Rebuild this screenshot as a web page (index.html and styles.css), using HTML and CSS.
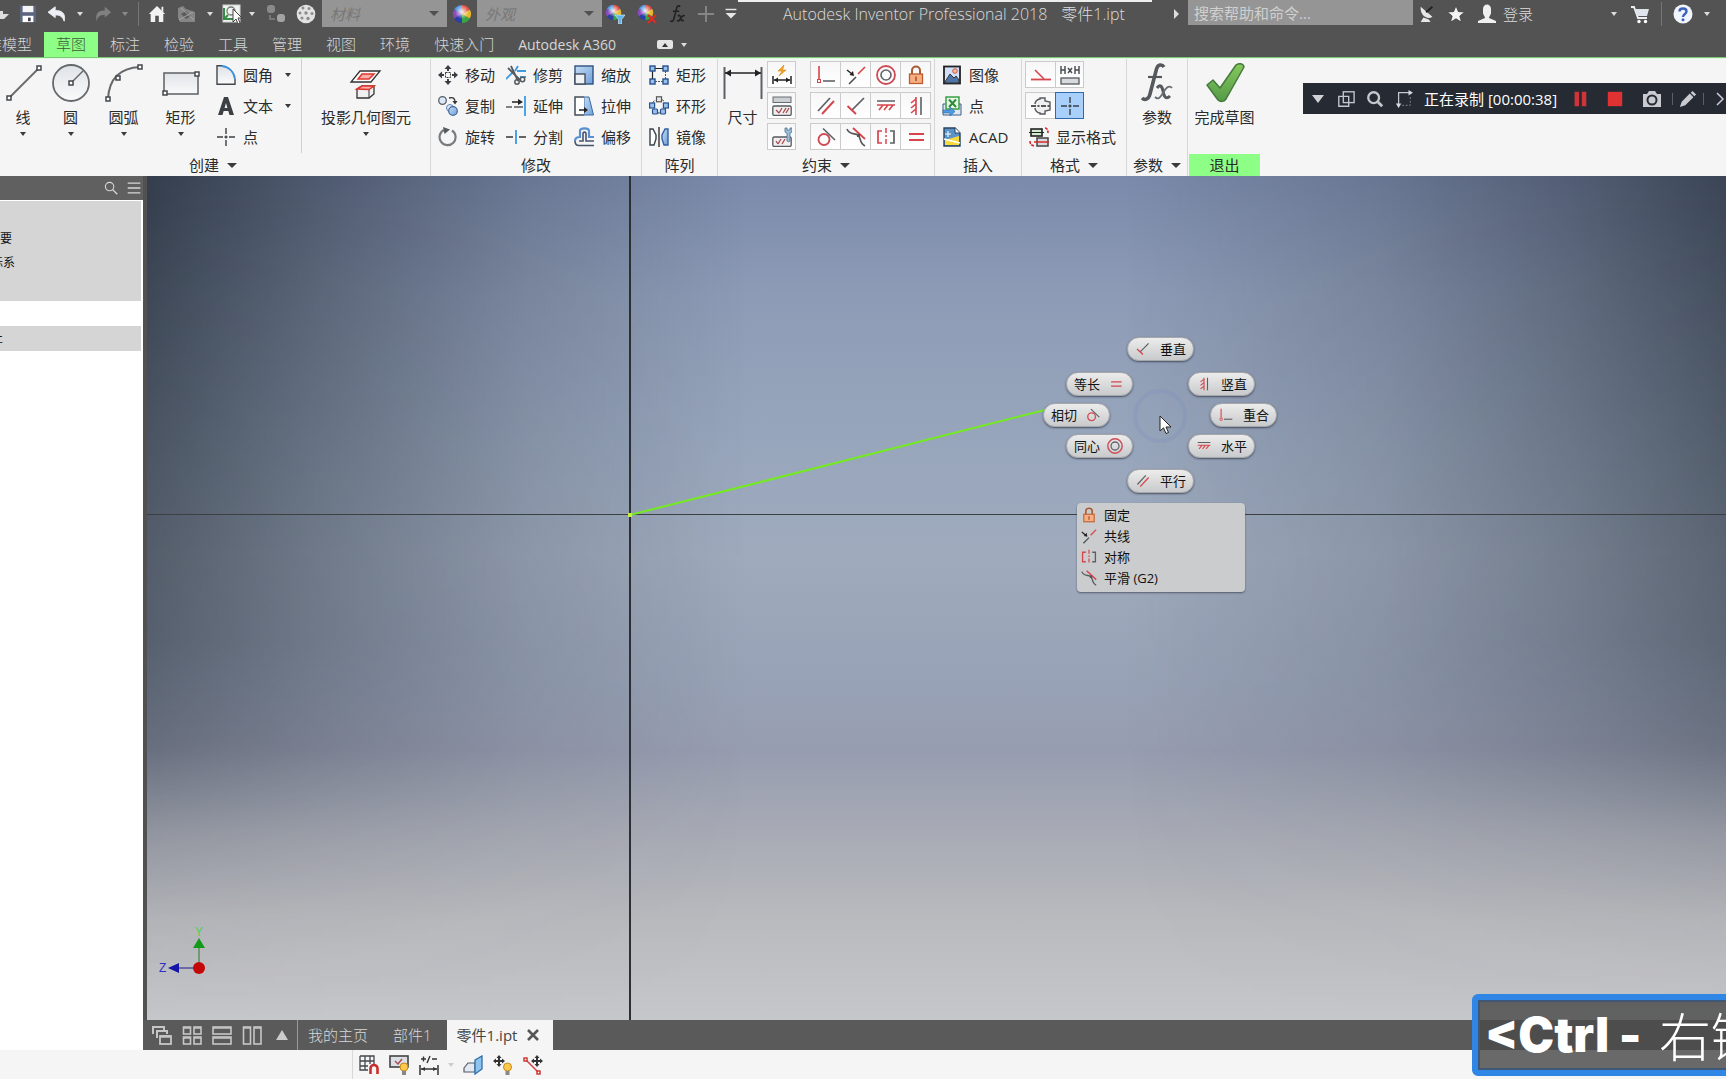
FILE: index.html
```html
<!DOCTYPE html>
<html lang="zh-CN">
<head>
<meta charset="utf-8">
<title>Autodesk Inventor Professional 2018 - 零件1.ipt</title>
<link rel="stylesheet" href="styles.css">
</head>
<body>
<svg class="defs" aria-hidden="true">
  <defs>
    <linearGradient id="steel" x1="0" y1="0" x2="0" y2="1"><stop offset="0" stop-color="#dfe3e8"/><stop offset="1" stop-color="#fafafa"/></linearGradient>
    <linearGradient id="tick" x1="0" y1="0" x2="0" y2="1"><stop offset="0" stop-color="#86c95f"/><stop offset="1" stop-color="#559a48"/></linearGradient>
    <linearGradient id="blue" x1="0" y1="0" x2="1" y2="1"><stop offset="0" stop-color="#c4dcf6"/><stop offset="1" stop-color="#6f9fd8"/></linearGradient>
    <radialGradient id="shine"><stop offset="0" stop-color="#fff" stop-opacity=".9"/><stop offset="1" stop-color="#fff" stop-opacity="0"/></radialGradient>
  </defs>
  <symbol id="i-coincident" viewBox="0 0 20 20"><path d="M3 1V14" stroke="#d6444c" stroke-width="1.6" fill="none"/><rect x="1.500" y="14.500" width="3" height="3" fill="none" stroke="#d6444c"/><path d="M7 16H19" stroke="#55595e" stroke-width="1.500"/></symbol>
  <symbol id="i-collinear" viewBox="0 0 20 20"><path d="M3 19L10 12" stroke="#4b4f54" stroke-width="1.600"/><path d="M12 9L19 2" stroke="#d6444c" stroke-width="1.600"/><path d="M1 5L6 9" stroke="#222" stroke-width="1.400"/><path d="M8 11L3.500 10L7 6Z" fill="#222"/></symbol>
  <symbol id="i-concentric" viewBox="0 0 20 20"><circle cx="10" cy="10" r="9" fill="none" stroke="#cf4b55" stroke-width="1.800"/><circle cx="10" cy="10" r="5" fill="none" stroke="#60646a" stroke-width="1.600"/></symbol>
  <symbol id="i-lock" viewBox="0 0 20 20"><path d="M6 9V5.500a4 4 0 0 1 8 0V9" fill="none" stroke="#a85a36" stroke-width="2"/><rect x="3.500" y="9" width="13" height="9.500" fill="#f7ae80" stroke="#bd5a30" stroke-width="1.300"/><path d="M10 11.500V16" stroke="#a04a2a" stroke-width="1.400"/></symbol>
  <symbol id="i-parallel" viewBox="0 0 20 20"><path d="M2 15L14 2" stroke="#5c6066" stroke-width="1.700"/><path d="M6 18L18 5" stroke="#d6444c" stroke-width="1.900"/></symbol>
  <symbol id="i-perp" viewBox="0 0 20 20"><path d="M6 14L18 2" stroke="#5c6066" stroke-width="1.700"/><path d="M1.500 10L10 18" stroke="#d6444c" stroke-width="1.900"/></symbol>
  <symbol id="i-horizontal" viewBox="0 0 20 20"><path d="M1 5H19" stroke="#5c6066" stroke-width="1.500"/><path d="M1 9H19M7 9L3 14M12 9L8 14M17 9L13 14" stroke="#d6444c" stroke-width="1.600" fill="none"/></symbol>
  <symbol id="i-vertical" viewBox="0 0 20 20"><path d="M15 1V19" stroke="#5c6066" stroke-width="1.600"/><path d="M10 1V19M10 3L5 7M10 8L5 12M10 13L5 17" stroke="#d6444c" stroke-width="1.600" fill="none"/></symbol>
  <symbol id="i-tangent" viewBox="0 0 20 20"><circle cx="8" cy="12.500" r="5.500" fill="none" stroke="#cf4b55" stroke-width="1.900"/><path d="M7 1.500L19 13" stroke="#5c6066" stroke-width="1.600"/></symbol>
  <symbol id="i-smooth" viewBox="0 0 20 20"><path d="M1 2C3 8 9 6 12 8C15 10 13 16 19 19" fill="none" stroke="#55595e" stroke-width="1.600"/><path d="M7 1L19 12" stroke="#d6444c" stroke-width="1.800"/><rect x="11" y="7" width="3" height="3" fill="#555"/></symbol>
  <symbol id="i-symmetric" viewBox="0 0 20 20"><path d="M6 4H2V16H6" fill="none" stroke="#d6444c" stroke-width="1.700"/><path d="M10 1V19" stroke="#d6444c" stroke-width="1.500" stroke-dasharray="5 2 2 2"/><path d="M14 4H18V16H14" fill="none" stroke="#5c6066" stroke-width="1.700"/></symbol>
  <symbol id="i-equal" viewBox="0 0 20 20"><path d="M3 7H18M3 13H18" stroke="#d6444c" stroke-width="1.800"/></symbol>
  <symbol id="i-autodim" viewBox="0 0 20 20"><path d="M12 0L6 6H10L7 11L14 5H10.500Z" fill="#f5a623" stroke="#d58310" stroke-width=".6"/><path d="M1 11V19M19 11V19M2 15H18" stroke="#222" stroke-width="1.500"/><path d="M2 15L6 12.500V17.500ZM18 15L14 12.500V17.500Z" fill="#222"/></symbol>
  <symbol id="i-showcon" viewBox="0 0 20 20"><rect x="1" y="1" width="18" height="5.500" fill="#ccd0d4" stroke="#666b70"/><rect x=".8" y="10" width="18.400" height="9.500" rx="1.500" fill="#f0eeee" stroke="#555a60" stroke-width="1.300"/><path d="M4 14L7 17M10 12L7 17M11 17L14 12M14 17L17 12" stroke="#a84a50" stroke-width="1.300"/></symbol>
  <symbol id="i-setcon" viewBox="0 0 20 20"><rect x=".8" y="10" width="18.400" height="9.500" rx="1.500" fill="#f0eeee" stroke="#555a60" stroke-width="1.300"/><path d="M4 14L6 17M9 12L6 17M10 17L13 12" stroke="#a84a50" stroke-width="1.300"/><path d="M13 1V5L15 6V14a2 2 0 0 0 3 0V6L20 5V1H18V3H15V1Z" fill="#9fc0dc" stroke="#4a6f90" stroke-width=".8"/></symbol>
  <symbol id="i-line" viewBox="0 0 40 40"><path d="M6 35L36 5" stroke="#66696c" stroke-width="1.800"/><g fill="#fff" stroke="#44484c" stroke-width="1.500"><rect x="4" y="33" width="4" height="4"/><rect x="34" y="3" width="4" height="4"/></g></symbol>
  <symbol id="i-circle" viewBox="0 0 40 40"><circle cx="20" cy="20" r="18" fill="url(#steel)" stroke="#66696c" stroke-width="1.800"/><path d="M20 20L32 8" stroke="#66696c" stroke-width="1.500"/><rect x="18" y="18" width="4" height="4" fill="#fff" stroke="#44484c" stroke-width="1.500"/></symbol>
  <symbol id="i-arc" viewBox="0 0 40 40"><path d="M4 36C5 16 16 5 36 4" fill="none" stroke="#66696c" stroke-width="2"/><g fill="#fff" stroke="#44484c" stroke-width="1.500"><rect x="2" y="34" width="4" height="4"/><rect x="12" y="13" width="4" height="4"/><rect x="34" y="2" width="4" height="4"/></g></symbol>
  <symbol id="i-rect" viewBox="0 0 40 40"><rect x="3" y="10" width="34" height="21" fill="url(#steel)" stroke="#66696c" stroke-width="1.600"/><g fill="#fff" stroke="#44484c" stroke-width="1.500"><rect x="2" y="28" width="4" height="4"/><rect x="34" y="9" width="4" height="4"/></g></symbol>
  <symbol id="i-fillet" viewBox="0 0 20 20"><path d="M1 19V1H6C13 2 18 7 19 14V19Z" fill="url(#steel)"/><path d="M6 .8H1V19.200H19V14" fill="none" stroke="#44484c" stroke-width="1.400"/><path d="M6 1C13 2 18 7 19 14" fill="none" stroke="#3b8fdc" stroke-width="1.800"/></symbol>
  <symbol id="i-text" viewBox="0 0 20 20"><path d="M2 19L8 1H12L18 19H13.500L12.300 15H7.700L6.500 19ZM8.600 12H11.400L10 7Z" fill="#3c4044" fill-rule="evenodd"/></symbol>
  <symbol id="i-point" viewBox="0 0 20 20"><path d="M10 1V7M10 13V19M1 10H7M13 10H19M8.500 10H11.500M10 8.500V11.500" stroke="#3c4044" stroke-width="1.400"/></symbol>
  <symbol id="i-project" viewBox="0 0 40 40"><path d="M14 8H34L25 19H5Z" fill="#fff" stroke="#333" stroke-width="1.300"/><path d="M16 11H28L23 16H12Z" fill="#f8b0aa" stroke="#e0362e" stroke-width="1.500"/><path d="M11 26L16 23H28V31L23 35H11Z" fill="#f0f0f0" stroke="#333" stroke-width="1.300"/><path d="M11 26L16 23H28L23 26.500Z" fill="#f8b0aa" stroke="#e0362e" stroke-width="1.500"/><path d="M23 27V35" stroke="#333"/></symbol>
  <symbol id="i-move" viewBox="0 0 20 20"><rect x="7.500" y="7.500" width="5" height="5" fill="none" stroke="#333" stroke-dasharray="2 1"/><g fill="#3a3e44"><path d="M10 0L13.500 4H11V6H9V4H6.500ZM10 20L13.500 16H11V14H9V16H6.500ZM0 10L4 6.500V9H6V11H4V13.500ZM20 10L16 6.500V9H14V11H16V13.500Z"/></g></symbol>
  <symbol id="i-copy" viewBox="0 0 20 20"><circle cx="4.500" cy="4.500" r="3.800" fill="#dce8f5" stroke="#555f6b" stroke-width="1.300"/><circle cx="12" cy="12" r="3.500" fill="#dce8f5" stroke="#5c86b8"/><circle cx="15" cy="15" r="4.300" fill="url(#blue)" stroke="#42679b" stroke-width="1.200"/><path d="M11 2C15 1 17 2 17 6" fill="none" stroke="#333" stroke-width="1.300"/><path d="M14.500 5H19.500L17 8.500Z" fill="#333"/></symbol>
  <symbol id="i-rotate" viewBox="0 0 20 20"><path d="M14 3.500A8 8 0 1 1 6 3" fill="none" stroke="#777b80" stroke-width="2.200"/><path d="M5 0L12 2.500L6.500 7Z" fill="#555a5f"/></symbol>
  <symbol id="i-trim" viewBox="0 0 20 20"><path d="M0 14L7 7M9 6L12 1M11 6H20M14 12H20" stroke="#3f9be0" stroke-width="1.900"/><path d="M2 3L14 15M5 1L12 16" stroke="#555a60" stroke-width="1.800"/><circle cx="11" cy="17" r="2.200" fill="none" stroke="#555a60" stroke-width="1.500"/><circle cx="16.500" cy="14.500" r="2.200" fill="none" stroke="#555a60" stroke-width="1.500"/></symbol>
  <symbol id="i-extend" viewBox="0 0 20 20"><path d="M19 0V20" stroke="#4aa3e8" stroke-width="2"/><path d="M0 11H6M8 11H17" stroke="#555a60" stroke-width="1.500"/><path d="M6 6H14" stroke="#222" stroke-width="1.500"/><path d="M17 6L12 3V9Z" fill="#222"/></symbol>
  <symbol id="i-split" viewBox="0 0 20 20"><path d="M10 3V17" stroke="#4aa3e8" stroke-width="2"/><path d="M0 10H7M13 10H20" stroke="#333" stroke-width="1.500"/></symbol>
  <symbol id="i-scale" viewBox="0 0 20 20"><rect x="1" y="1" width="18" height="18" fill="url(#blue)" stroke="#2f527f" stroke-width="1.400"/><rect x="1" y="9" width="10" height="10" fill="#eef2f7" stroke="#444c58" stroke-width="1.400"/></symbol>
  <symbol id="i-stretch" viewBox="0 0 20 20"><path d="M10 1H15L19.500 19H10Z" fill="url(#blue)" stroke="#3d6aa2"/><path d="M10 1H1V19H10" fill="#fff" stroke="#444c58" stroke-width="1.500"/><path d="M5 14H11" stroke="#222" stroke-width="1.500"/><path d="M14 14L10 11V17Z" fill="#222"/></symbol>
  <symbol id="i-offset" viewBox="0 0 20 20"><path d="M1 14C1 11 3 10 6 10V4C6 .5 15 .5 15 4V10H20" fill="none" stroke="#5a8fd0" stroke-width="2.200"/><path d="M1 14C1 17 2 18.500 5 18.500H20M5 14H9V7C9 4.500 12 4.500 12 7V14H20" fill="none" stroke="#46566c" stroke-width="1.600"/></symbol>
  <symbol id="i-rectarr" viewBox="0 0 20 20"><path d="M6 3.500H14M3.500 6V14" stroke="#222" stroke-width="1.200"/><path d="M16.500 6V14M6 16.500H14" stroke="#555" stroke-dasharray="2 1"/><g fill="#9cc0ec" stroke="#28508c" stroke-width="1.400"><rect x="1" y="1" width="5" height="5"/><rect x="14" y="1" width="5" height="5"/><rect x="1" y="14" width="5" height="5"/><rect x="14" y="14" width="5" height="5"/></g></symbol>
  <symbol id="i-circarr" viewBox="0 0 20 20"><circle cx="10" cy="10" r="7" fill="none" stroke="#333" stroke-dasharray="3 2"/><g fill="#9cc0ec" stroke="#28508c" stroke-width="1.200"><rect x="7.500" y=".8" width="5" height="5" fill="#e8e8e8" stroke="#555"/><rect x=".6" y="7" width="5" height="5"/><rect x="14.400" y="7" width="5" height="5"/><rect x="3.500" y="13" width="5" height="5" rx="1"/><rect x="11.500" y="13" width="5" height="5" rx="1"/></g></symbol>
  <symbol id="i-mirror" viewBox="0 0 20 20"><path d="M1 2H4L7 8V12L5 18H1Z" fill="#fff" stroke="#39414c" stroke-width="1.400"/><path d="M10 0V20" stroke="#222" stroke-width="1.300"/><path d="M19 2H16L13 8V12L15 18H19Z" fill="url(#blue)" stroke="#3260a0" stroke-width="1.400"/></symbol>
  <symbol id="i-dim" viewBox="0 0 40 34"><path d="M1.500 1V33M38.500 1V33" stroke="#5d6166" stroke-width="2"/><path d="M2 7H38" stroke="#222" stroke-width="1.400"/><path d="M2 7L8 3.500V10.500ZM38 7L32 3.500V10.500Z" fill="#222"/></symbol>
  <symbol id="i-image" viewBox="0 0 20 20"><rect x="2" y="1.500" width="16" height="17" fill="#cfe0f8" stroke="#222" stroke-width="1.800"/><path d="M3 17L8 9L12 13L14 11L17 15V18H3Z" fill="#4f74a8" stroke="#333"/><circle cx="13" cy="6" r="2.300" fill="#f7b7a0" stroke="#d05a40"/></symbol>
  <symbol id="i-excel" viewBox="0 0 20 20"><path d="M1 8H19V19H1Z" fill="#dfe8f2" stroke="#3f5f86"/><rect x="4" y="1" width="13" height="12" fill="#e8f6e8" stroke="#2f9a3c" stroke-width="1.400"/><path d="M7 3.500L14 11M14 3.500L7 11" stroke="#2f8a3a" stroke-width="2"/><path d="M1 14H8V11L13 15.500L8 20V17H1Z" fill="#4c9be0" stroke="#2c68a0" stroke-width=".6"/></symbol>
  <symbol id="i-acad" viewBox="0 0 20 20"><path d="M2 1H13L18 6V19H2Z" fill="#5a93c8" stroke="#27435f" stroke-width="1.400"/><path d="M3 13L17 9V18H3Z" fill="#f8d93a"/><path d="M2 12L18 16" stroke="#fff" stroke-width="1.500"/><path d="M13 1V6H18" fill="#fff" stroke="#27435f"/><path d="M6 4V10M3 7H9" stroke="#fff"/></symbol>
  <symbol id="i-constr" viewBox="0 0 20 20"><path d="M0 14.500H20" stroke="#d6444c" stroke-width="1.800"/><path d="M4 5L13 14" stroke="#d6444c" stroke-width="1.600"/></symbol>
  <symbol id="i-driven" viewBox="0 0 20 20"><path d="M1 1V9M5 1V9M1 5H5M15 1V9M19 1V9M15 5H19M8 3L12 8M12 3L8 8" stroke="#44484c" stroke-width="1.400"/><rect x="1" y="13" width="18" height="6" fill="#d8dade" stroke="#555a5f" stroke-width="1.300"/></symbol>
  <symbol id="i-center" viewBox="0 0 20 20"><path d="M4 8C4 6 6 3 9 3V2H14V5L19 6V14L14 15V18H9V17C6 17 4 14 4 12" fill="#f0f0f0" stroke="#555a5f" stroke-width="1.400"/><path d="M0 10H20" stroke="#222" stroke-width="1.300" stroke-dasharray="5 1.500 2 1.500"/></symbol>
  <symbol id="i-format" viewBox="0 0 20 20"><rect x="2" y="2" width="11" height="7" fill="#cfeccf" stroke="#222" stroke-width="1.600"/><path d="M0 5.500H15" stroke="#222"/><rect x="8" y="11" width="11" height="8" fill="#d8dade" stroke="#444" stroke-width="1.500"/><path d="M5 15H20" stroke="#d62b2b" stroke-width="1.500"/><path d="M16 1C18 1 19 3 19 6M1 14C1 17 2 18 5 19" fill="none" stroke="#d62b2b" stroke-width="1.600" stroke-dasharray="3 1"/></symbol>
  <symbol id="i-fx" viewBox="0 0 36 40"><path d="M25 4C23 1 19 1 17.500 6L11 31C10 36 6 38 3 35" fill="none" stroke="#55585c" stroke-width="3.600"/><path d="M9 14H23" stroke="#55585c" stroke-width="2.200"/><path d="M18 25C21 21 23 23 24 28C25 34 27 37 31 33" fill="none" stroke="#55585c" stroke-width="3"/><path d="M33 25C30 21 26 26 24 30C21 35 19 37 16 34" fill="none" stroke="#6a6d70" stroke-width="1.800"/></symbol>
  <symbol id="i-check" viewBox="0 0 40 40"><path d="M2 22L8 17L15 25L31 2C34 0 38 0 39 4L21 36C19 39 15 39 13 37Z" fill="url(#tick)" stroke="#447a3c" stroke-width="1.500" stroke-linejoin="round"/></symbol>
  <symbol id="i-save" viewBox="0 0 20 20"><path d="M1 1H19V19H1Z" fill="#5b6580"/><rect x="4" y="1" width="12" height="7" fill="#f5f5f5"/><rect x="4" y="12" width="12" height="7" fill="#fff"/><rect x="10" y="14" width="3" height="4" fill="#445"/></symbol>
  <symbol id="i-undo" viewBox="0 0 20 20"><path d="M0 8L8 2V6C15 6 20 9 18 18C16 13 14 11 8 11V14Z" fill="#eceff4" stroke="#eceff4"/></symbol>
  <symbol id="i-redo" viewBox="0 0 20 20"><path d="M19 8L12 2V6C5 6 1 9 3 18C4 13 6 11 12 11V14Z" fill="#808080"/></symbol>
  <symbol id="i-home" viewBox="0 0 20 20"><path d="M10 1L19 10H17V19H12V12H8V19H3V10H1Z" fill="#f2f2f2"/><path d="M15 2H17V8L15 6Z" fill="#f2f2f2"/></symbol>
  <symbol id="i-part" viewBox="0 0 20 20"><path d="M1 4L6 2L9 5L18 8V18H3L1 14Z" fill="#858585"/><path d="M4 10L9 7L14 12L9 15Z" fill="#5c5c5c"/><path d="M2 16L16 8M4 4L17 16" fill="none" stroke="#a5a5a5"/></symbol>
  <symbol id="i-select" viewBox="0 0 20 20"><rect x="1" y="1" width="17" height="17" fill="#f1f3f1" stroke="#cdd3cd"/><path d="M2 4V15H12M2 15L6 11" fill="none" stroke="#358c45" stroke-width="2"/><circle cx="9" cy="7" r="4" fill="none" stroke="#777" stroke-width="1.300"/><path d="M11 5V18L14 15L16 20L18 19L16 14H20Z" fill="#fff" stroke="#444"/></symbol>
  <symbol id="i-balls" viewBox="0 0 20 20"><rect x="1" y="1" width="8" height="8" rx="3" fill="#8a8a8a"/><rect x="11" y="10" width="8" height="8" rx="3" fill="#a3a3a3"/><path d="M4 11V15H9" stroke="#777" fill="none" stroke-width="2"/></symbol>
  <symbol id="i-globe" viewBox="0 0 20 20"><circle cx="10" cy="10" r="9.300" fill="#e2e2e2"/><g fill="#8c8c8c"><circle cx="7" cy="4" r="1.500"/><circle cx="13" cy="4.500" r="1.500"/><circle cx="4" cy="9" r="1.500"/><circle cx="10" cy="9" r="1.700"/><circle cx="16" cy="9.500" r="1.500"/><circle cx="6" cy="14" r="1.500"/><circle cx="12" cy="14.500" r="1.700"/></g></symbol>
  <symbol id="i-wheel" viewBox="0 0 20 20"><path d="M10 10V1A9 9 0 0 0 2.200 5.500Z" fill="#4f95e0"/><path d="M10 10L2.200 5.500A9 9 0 0 0 2.200 14.500Z" fill="#8a4ac0"/><path d="M10 10L2.200 14.500A9 9 0 0 0 10 19Z" fill="#2c3fa8"/><path d="M10 10V19A9 9 0 0 0 17.800 14.500Z" fill="#3aa544"/><path d="M10 10L17.800 14.500A9 9 0 0 0 17.800 5.500Z" fill="#e8b62c"/><path d="M10 10L17.800 5.500A9 9 0 0 0 10 1Z" fill="#e34a3e"/><circle cx="10" cy="8" r="7" fill="url(#shine)"/></symbol>
  <symbol id="i-wfilter" viewBox="0 0 20 20"><use href="#i-wheel" width="17" height="17"/><path d="M10 11H20L16.500 15.500V20H13.500V15.500Z" fill="#5db5ee" stroke="#e6f3fb" stroke-width=".6"/></symbol>
  <symbol id="i-wclear" viewBox="0 0 20 20"><use href="#i-wheel" width="17" height="17"/><path d="M11 11L19 19M19 11L11 19" stroke="#e02b20" stroke-width="2"/></symbol>
  <symbol id="i-fxdark" viewBox="0 0 36 40"><path d="M25 4C23 1 19 1 17.500 6L11 31C10 36 6 38 3 35M9 14H23M20 25C23 21 25 23 26 28C27 34 29 37 33 33M35 25C32 21 28 26 26 30C23 35 21 37 18 34" fill="none" stroke="#222" stroke-width="3.600"/></symbol>
  <symbol id="i-plus" viewBox="0 0 20 20"><path d="M10 1V19M1 10H19" stroke="#858585" stroke-width="2.200"/></symbol>
  <symbol id="i-overflow" viewBox="0 0 20 20"><path d="M4 5H16" stroke="#e6e6e6" stroke-width="1.600"/><path d="M4 9H16L10 15Z" fill="#e6e6e6"/></symbol>
  <symbol id="i-dish" viewBox="0 0 20 20"><path d="M3 2L16 13C11 17 2 12 3 2ZM3 19L6 14L12 16L14 19Z" fill="#e8e8e8"/><path d="M9 8L16 2" stroke="#222" stroke-width="2"/></symbol>
  <symbol id="i-star" viewBox="0 0 20 20"><path d="M10 1L12.600 7.400L19.500 7.800L14.200 12.200L16 19L10 15.200L4 19L5.800 12.200L.5 7.800L7.400 7.400Z" fill="#f4f4f4" stroke="#333" stroke-width=".7"/></symbol>
  <symbol id="i-user" viewBox="0 0 20 20"><path d="M6 5C6 -1 14 -1 14 5V9C14 11 12 12 12 14L19 17V19H1V17L8 14C8 12 6 11 6 9Z" fill="#f0f0f0"/></symbol>
  <symbol id="i-cart" viewBox="0 0 20 20"><path d="M1 3H4L8 14H17" fill="none" stroke="#eceff4" stroke-width="1.800"/><path d="M5 5H19L17 12H7Z" fill="#dfe3ec"/><circle cx="9" cy="17.500" r="1.700" fill="#fff"/><circle cx="15.500" cy="17.500" r="1.700" fill="#fff"/></symbol>
  <symbol id="i-help" viewBox="0 0 20 20"><circle cx="10" cy="10" r="9.500" fill="#f1f4fa"/><path d="M6.500 7.500C6.500 3.500 13.500 3.500 13.500 7.500C13.500 10 10 10 10 13" fill="none" stroke="#3b62b8" stroke-width="2.400"/><circle cx="10" cy="15.800" r="1.500" fill="#3b62b8"/></symbol>
  <symbol id="i-search" viewBox="0 0 20 20"><circle cx="8" cy="8" r="6" fill="none" stroke="currentColor" stroke-width="1.600"/><path d="M12.500 12.500L19 19" stroke="currentColor" stroke-width="1.800"/></symbol>
  <symbol id="i-find" viewBox="0 0 20 20"><circle cx="8.500" cy="8.500" r="6" fill="none" stroke="#c4c7cc" stroke-width="2.600"/><path d="M13 13L18 18" stroke="#c4c7cc" stroke-width="3.200"/></symbol>
  <symbol id="i-menu" viewBox="0 0 20 20"><path d="M1 3H19M1 10H19M1 17H19" stroke="currentColor" stroke-width="1.800"/></symbol>
  <symbol id="i-windows" viewBox="0 0 20 20"><rect x="7" y="2" width="12" height="12" fill="none" stroke="#c4c7cc" stroke-width="1.500"/><path d="M2 7H13V18H2Z" fill="none" stroke="#c4c7cc" stroke-width="1.500"/></symbol>
  <symbol id="i-resize" viewBox="0 0 20 20"><path d="M16 3H4V16" fill="none" stroke="#c4c7cc" stroke-width="1.400"/><path d="M20 3L15 0V6ZM4 20L1 15H7Z" fill="#d8dade"/><path d="M8 17H17V7" fill="none" stroke="#8f949c" stroke-dasharray="2 2"/></symbol>
  <symbol id="i-pause" viewBox="0 0 20 20"><path d="M4 2H9V18H4ZM12 2H17V18H12Z" fill="#cf3438"/></symbol>
  <symbol id="i-stop" viewBox="0 0 20 20"><rect x="2" y="2" width="16" height="16" fill="#e03232"/></symbol>
  <symbol id="i-camera" viewBox="0 0 20 20"><path d="M1 5H5L7 2H13L15 5H19V18H1Z" fill="#c9cbd0"/><circle cx="10" cy="11" r="4.500" fill="#c9cbd0" stroke="#252a33" stroke-width="2"/></symbol>
  <symbol id="i-pencil" viewBox="0 0 20 20"><path d="M1 19L3 13L12 4L16 8L7 17ZM13 3L15 1L19 5L17 7Z" fill="#c9cbd0"/></symbol>
  <symbol id="i-cascade" viewBox="0 0 20 20"><path d="M1 9V2H12V5M5 13V6H15V9" fill="none" stroke="#c6c6c6" stroke-width="2"/><rect x="8" y="11" width="11" height="8" fill="none" stroke="#c6c6c6" stroke-width="1.800"/><path d="M8 11.500H19" stroke="#c6c6c6" stroke-width="2.500"/></symbol>
  <symbol id="i-tiles" viewBox="0 0 20 20"><g fill="none" stroke="#c6c6c6" stroke-width="1.600"><rect x="1.500" y="2" width="7" height="7"/><rect x="12" y="2" width="7" height="7"/><rect x="1.500" y="12" width="7" height="7"/><rect x="12" y="12" width="7" height="7"/><path d="M1 3H9M12 3H19M1 13H9M12 13H19"/></g></symbol>
  <symbol id="i-rows" viewBox="0 0 20 20"><g fill="none" stroke="#c6c6c6" stroke-width="1.600"><rect x="1" y="2" width="18" height="7"/><rect x="1" y="12" width="18" height="7"/><path d="M1 3H19M1 13H19"/></g></symbol>
  <symbol id="i-cols" viewBox="0 0 20 20"><g fill="none" stroke="#c6c6c6" stroke-width="1.600"><rect x="1.500" y="2" width="7" height="17"/><rect x="12" y="2" width="7" height="17"/><path d="M1 3H9M12 3H19"/></g></symbol>
  <symbol id="i-snap" viewBox="0 0 20 20"><path d="M1 1H15V9M1 1V15H9M1 6H15M1 11H9M6 1V15M11 1V9" fill="none" stroke="#44484c" stroke-width="1.300"/><path d="M11.500 19V13.500a3.500 3.500 0 0 1 7 0V19" fill="none" stroke="#c9302c" stroke-width="2.600"/></symbol>
  <symbol id="i-showall" viewBox="0 0 20 20"><rect x="1" y="1" width="18" height="11" fill="#dcdfe3" stroke="#444" stroke-width="1.600"/><path d="M6 6L9 9L13 4" fill="none" stroke="#a84a50" stroke-width="1.400"/><circle cx="15" cy="12" r="4" fill="#fcc94a" stroke="#c98a1c"/><rect x="13" y="16" width="4" height="4" fill="#888"/></symbol>
  <symbol id="i-tol" viewBox="0 0 20 20"><path d="M2 4H7M4.500 1.500V6.500M8 8L11 1M13 4H18" stroke="#333" stroke-width="1.400"/><path d="M1 10V20M19 10V20M2 14H18" stroke="#333" stroke-width="1.500"/><path d="M2 14L6 12V16ZM18 14L14 12V16Z" fill="#333"/></symbol>
  <symbol id="i-slice" viewBox="0 0 20 20"><path d="M1 13L5 8H12V17H1Z" fill="#e4e9ef" stroke="#555d68" stroke-width="1.200"/><path d="M12 5L19 1V14L12 19Z" fill="#8fc4ee" stroke="#2e6ea8" stroke-width="1.300"/></symbol>
  <symbol id="i-dof" viewBox="0 0 20 20"><path d="M6 0L8.500 3H7V5H9V3.500L12 6L9 8.500V7H7V9H8.500L6 12L3.500 9H5V7H3V8.500L0 6L3 3.500V5H5V3H3.500Z" fill="#333"/><circle cx="14.500" cy="12" r="4" fill="#fcc94a" stroke="#c98a1c"/><rect x="12.500" y="16" width="4" height="4" fill="#888"/></symbol>
  <symbol id="i-relax" viewBox="0 0 20 20"><path d="M3 5L15 17" stroke="#d6444c" stroke-width="1.600"/><g fill="#fff" stroke="#c9302c" stroke-width="1.400"><rect x="1" y="3" width="3" height="3"/><rect x="14" y="16" width="3" height="3"/></g><path d="M14 0L16.500 3H15V5H17V3.500L20 6L17 8.500V7H15V9H16.500L14 12L11.500 9H13V7H11V8.500L8 6L11 3.500V5H13V3H11.500Z" fill="#333"/></symbol>
</svg>

<header class="titlebar">
  <button class="tool" aria-label="新建"><svg class="cut" width="12" height="12" viewBox="0 0 12 12"><path d="M0 3H5V6L11 6L6 11H0Z" fill="#ddd"/></svg></button>
  <button class="tool" aria-label="保存"><svg class="i18"><use href="#i-save"/></svg></button>
  <button class="tool" aria-label="撤销"><svg class="i18"><use href="#i-undo"/></svg></button>
  <span class="caret light"></span>
  <button class="tool" aria-label="重做"><svg class="i18"><use href="#i-redo"/></svg></button>
  <span class="caret dim"></span>
  <span class="bar"></span>
  <button class="tool" aria-label="主页"><svg class="i18"><use href="#i-home"/></svg></button>
  <button class="tool" aria-label="零件"><svg class="i20"><use href="#i-part"/></svg></button>
  <span class="caret light"></span>
  <button class="tool" aria-label="选择"><svg class="i20"><use href="#i-select"/></svg></button>
  <span class="caret light"></span>
  <button class="tool" aria-label="更新"><svg class="i20"><use href="#i-balls"/></svg></button>
  <button class="tool" aria-label="材料库"><svg class="i20"><use href="#i-globe"/></svg></button>
  <label class="combo first"><select aria-label="材料"><option>材料</option></select><span class="caret dark"></span></label>
  <button class="tool" aria-label="外观库"><svg class="i20"><use href="#i-wheel"/></svg></button>
  <label class="combo"><select aria-label="外观"><option>外观</option></select><span class="caret dark"></span></label>
  <button class="tool" aria-label="调整"><svg class="i20"><use href="#i-wfilter"/></svg></button>
  <button class="tool" aria-label="清除"><svg class="i20"><use href="#i-wclear"/></svg></button>
  <button class="tool" aria-label="参数"><svg class="i18"><use href="#i-fxdark"/></svg></button>
  <button class="tool" aria-label="添加"><svg class="i18"><use href="#i-plus"/></svg></button>
  <button class="tool" aria-label="自定义"><svg class="i18"><use href="#i-overflow"/></svg></button>
  <h1 class="title">Autodesk Inventor Professional 2018<span>零件1.ipt</span></h1>
  <span class="play"></span>
  <input class="search" type="text" placeholder="搜索帮助和命令..." aria-label="搜索帮助和命令">
  <button class="tool" aria-label="通讯中心"><svg class="i18"><use href="#i-dish"/></svg></button>
  <button class="tool" aria-label="收藏"><svg class="i18"><use href="#i-star"/></svg></button>
  <button class="tool" aria-label="用户"><svg class="i20"><use href="#i-user"/></svg></button>
  <a class="login" href="#">登录</a>
  <span class="caret light"></span>
  <button class="tool" aria-label="商店"><svg class="i20"><use href="#i-cart"/></svg></button>
  <span class="bar"></span>
  <button class="tool" aria-label="帮助"><svg class="i20"><use href="#i-help"/></svg></button>
  <span class="caret light"></span>
</header>

<nav class="tabs">
  <a class="tab lead" href="#">三维模型</a><a class="tab active" href="#">草图</a><a class="tab" href="#">标注</a><a class="tab" href="#">检验</a><a class="tab" href="#">工具</a><a class="tab" href="#">管理</a><a class="tab" href="#">视图</a><a class="tab" href="#">环境</a><a class="tab" href="#">快速入门</a><a class="tab latin" href="#">Autodesk A360</a>
  <button class="collapse" aria-label="最小化功能区"><span></span></button><span class="caret light"></span>
</nav>

<section class="ribbon">
  <div class="panel create">
    <div class="tools">
      <button class="big w46"><svg class="i40"><use href="#i-line"/></svg>线<span class="caret"></span></button>
      <button class="big w48"><svg class="i40"><use href="#i-circle"/></svg>圆<span class="caret"></span></button>
      <button class="big w58"><svg class="i40"><use href="#i-arc"/></svg>圆弧<span class="caret"></span></button>
      <button class="big w58"><svg class="i40"><use href="#i-rect"/></svg>矩形<span class="caret"></span></button>
      <div class="stack more">
        <button class="row"><svg class="i20"><use href="#i-fillet"/></svg>圆角<span class="caret"></span></button>
        <button class="row"><svg class="i20"><use href="#i-text"/></svg>文本<span class="caret"></span></button>
        <button class="row"><svg class="i20"><use href="#i-point"/></svg>点</button>
      </div>
      <button class="big project"><svg class="i40"><use href="#i-project"/></svg>投影几何图元<span class="caret"></span></button>
    </div>
    <div class="foot">创建<span class="caret lg"></span></div>
  </div>
  <div class="panel modify">
    <div class="stack">
      <button class="row"><svg class="i20"><use href="#i-move"/></svg>移动</button>
      <button class="row"><svg class="i20"><use href="#i-trim"/></svg>修剪</button>
      <button class="row"><svg class="i20"><use href="#i-scale"/></svg>缩放</button>
      <button class="row"><svg class="i20"><use href="#i-copy"/></svg>复制</button>
      <button class="row"><svg class="i20"><use href="#i-extend"/></svg>延伸</button>
      <button class="row"><svg class="i20"><use href="#i-stretch"/></svg>拉伸</button>
      <button class="row"><svg class="i20"><use href="#i-rotate"/></svg>旋转</button>
      <button class="row"><svg class="i20"><use href="#i-split"/></svg>分割</button>
      <button class="row"><svg class="i20"><use href="#i-offset"/></svg>偏移</button>
    </div>
    <div class="foot">修改</div>
  </div>
  <div class="panel pattern">
    <div class="stack">
      <button class="row"><svg class="i20"><use href="#i-rectarr"/></svg>矩形</button>
      <button class="row"><svg class="i20"><use href="#i-circarr"/></svg>环形</button>
      <button class="row"><svg class="i20"><use href="#i-mirror"/></svg>镜像</button>
    </div>
    <div class="foot">阵列</div>
  </div>
  <div class="panel constrain">
    <div class="tools">
      <button class="big"><svg class="i40"><use href="#i-dim"/></svg>尺寸</button>
      <div class="cells one">
        <button aria-label="自动标注"><svg class="i20"><use href="#i-autodim"/></svg></button>
        <button aria-label="显示约束"><svg class="i20"><use href="#i-showcon"/></svg></button>
        <button aria-label="约束设置"><svg class="i20"><use href="#i-setcon"/></svg></button>
      </div>
      <div class="cells four">
        <button aria-label="重合"><svg class="i20"><use href="#i-coincident"/></svg></button>
        <button aria-label="共线"><svg class="i20"><use href="#i-collinear"/></svg></button>
        <button aria-label="同心"><svg class="i20"><use href="#i-concentric"/></svg></button>
        <button aria-label="固定"><svg class="i20"><use href="#i-lock"/></svg></button>
        <button aria-label="平行"><svg class="i20"><use href="#i-parallel"/></svg></button>
        <button aria-label="垂直"><svg class="i20"><use href="#i-perp"/></svg></button>
        <button aria-label="水平"><svg class="i20"><use href="#i-horizontal"/></svg></button>
        <button aria-label="竖直"><svg class="i20"><use href="#i-vertical"/></svg></button>
        <button aria-label="相切"><svg class="i20"><use href="#i-tangent"/></svg></button>
        <button aria-label="平滑"><svg class="i20"><use href="#i-smooth"/></svg></button>
        <button aria-label="对称"><svg class="i20"><use href="#i-symmetric"/></svg></button>
        <button aria-label="等长"><svg class="i20"><use href="#i-equal"/></svg></button>
      </div>
    </div>
    <div class="foot">约束<span class="caret lg"></span></div>
  </div>
  <div class="panel insert">
    <div class="stack">
      <button class="row"><svg class="i20"><use href="#i-image"/></svg>图像</button>
      <button class="row"><svg class="i20"><use href="#i-excel"/></svg>点</button>
      <button class="row"><svg class="i20"><use href="#i-acad"/></svg>ACAD</button>
    </div>
    <div class="foot">插入</div>
  </div>
  <div class="panel format">
    <div class="tools">
      <div class="cells two">
        <button aria-label="构造"><svg class="i20"><use href="#i-constr"/></svg></button>
        <button aria-label="联动尺寸"><svg class="i20"><use href="#i-driven"/></svg></button>
        <button aria-label="中心线"><svg class="i20"><use href="#i-center"/></svg></button>
        <button class="on" aria-label="中心点"><svg class="i20"><use href="#i-point"/></svg></button>
        <button class="row wide"><svg class="i20"><use href="#i-format"/></svg>显示格式</button>
      </div>
    </div>
    <div class="foot">格式<span class="caret lg"></span></div>
  </div>
  <div class="panel params">
    <div class="tools"><button class="big full"><svg class="i40"><use href="#i-fx"/></svg>参数</button></div>
    <div class="foot">参数<span class="caret lg"></span></div>
  </div>
  <div class="panel exit">
    <div class="tools"><button class="big full"><svg class="i40"><use href="#i-check"/></svg>完成草图</button></div>
    <div class="foot">退出</div>
  </div>
</section>

<main class="work">
  <aside class="browser">
    <div class="bhead"><svg class="i14"><use href="#i-search"/></svg><svg class="i14"><use href="#i-menu"/></svg></div>
    <ul class="tree">
      <li class="a">要</li>
      <li class="b">坐标系</li>
    </ul>
    <div class="end"><span>终止</span></div>
  </aside>
  <div class="doc">
    <div class="canvas">
      <svg class="sketch">
        <path d="M0 338.500H3000" stroke="#3d4043"/>
        <path d="M483 0V2000" stroke="#2c3034" stroke-width="2"/>
        <path d="M483 339L898 234" stroke="#74ea20" stroke-width="2"/>
        <rect x="481" y="337" width="4" height="4" fill="#c8f03c"/>
      </svg>
      <svg class="triad" width="60" height="60" viewBox="0 0 60 60">
        <path d="M43 43V18" stroke="#2a7a2a"/><path d="M43 13L49 23H37Z" fill="#129a1a"/>
        <path d="M43 43H20" stroke="#1a1a90"/><path d="M12 43L23 38V48Z" fill="#1414a8"/>
        <circle cx="43" cy="43" r="6" fill="#c40808"/>
        <text x="39" y="11" class="ty">Y</text><text x="3" y="47" class="tz">Z</text>
      </svg>
      <div class="marking">
        <span class="ring"></span>
        <button class="pill p1"><svg class="i14"><use href="#i-perp"/></svg>垂直</button>
        <button class="pill west p2">等长<svg class="i14"><use href="#i-equal"/></svg></button>
        <button class="pill p3"><svg class="i14"><use href="#i-vertical"/></svg>竖直</button>
        <button class="pill west p4">相切<svg class="i14"><use href="#i-tangent"/></svg></button>
        <button class="pill p5"><svg class="i14"><use href="#i-coincident"/></svg>重合</button>
        <button class="pill west p6">同心<svg class="i16"><use href="#i-concentric"/></svg></button>
        <button class="pill p7"><svg class="i14"><use href="#i-horizontal"/></svg>水平</button>
        <button class="pill p8"><svg class="i14"><use href="#i-parallel"/></svg>平行</button>
        <div class="menu">
          <button><svg class="i16"><use href="#i-lock"/></svg>固定</button>
          <button><svg class="i16"><use href="#i-collinear"/></svg>共线</button>
          <button><svg class="i16"><use href="#i-symmetric"/></svg>对称</button>
          <button><svg class="i16"><use href="#i-smooth"/></svg>平滑 (G2)</button>
        </div>
        <svg class="cursor" width="13" height="20" viewBox="0 0 13 20"><path d="M1 1V16L4.500 12.800L7 18.500L9.500 17.500L7 12H12Z" fill="#fff" stroke="#222"/></svg>
      </div>
    </div>
    <div class="docbar">
      <div class="views">
        <button class="tool" aria-label="层叠"><svg class="i20"><use href="#i-cascade"/></svg></button>
        <button class="tool" aria-label="平铺"><svg class="i20"><use href="#i-tiles"/></svg></button>
        <button class="tool" aria-label="水平排列"><svg class="i20"><use href="#i-rows"/></svg></button>
        <button class="tool" aria-label="垂直排列"><svg class="i20"><use href="#i-cols"/></svg></button>
        <button class="tool" aria-label="展开"><span class="up"></span></button>
      </div>
      <a class="doctab" href="#">我的主页</a>
      <a class="doctab second" href="#">部件1</a>
      <a class="doctab open" href="#">零件1.ipt<svg width="12" height="12" viewBox="0 0 12 12"><path d="M1 1L11 11M11 1L1 11" stroke="#555" stroke-width="2.600"/></svg></a>
    </div>
  </div>
</main>

<footer class="status">
  <button class="tool" aria-label="捕捉到网格"><svg class="i20"><use href="#i-snap"/></svg></button>
  <button class="tool" aria-label="显示所有约束"><svg class="i20"><use href="#i-showall"/></svg></button>
  <button class="tool" aria-label="尺寸显示"><svg class="i20"><use href="#i-tol"/></svg></button>
  <span class="caret pale"></span>
  <button class="tool" aria-label="切片观察"><svg class="i20"><use href="#i-slice"/></svg></button>
  <button class="tool" aria-label="显示自由度"><svg class="i20"><use href="#i-dof"/></svg></button>
  <button class="tool" aria-label="松弛模式"><svg class="i20"><use href="#i-relax"/></svg></button>
</footer>

<div class="recorder">
  <span class="down"></span>
  <svg class="i18"><use href="#i-windows"/></svg>
  <svg class="i18"><use href="#i-find"/></svg>
  <svg class="i18"><use href="#i-resize"/></svg>
  <span class="clock">正在录制 [00:00:38]</span>
  <button class="tool" aria-label="暂停"><svg class="i18"><use href="#i-pause"/></svg></button>
  <button class="tool" aria-label="停止"><svg class="i18"><use href="#i-stop"/></svg></button>
  <button class="tool shot" aria-label="截图"><svg class="i20"><use href="#i-camera"/></svg></button>
  <span class="bar"></span>
  <button class="tool pen" aria-label="画笔"><svg class="i18"><use href="#i-pencil"/></svg></button>
  <span class="bar"></span>
  <svg class="next" width="10" height="14" viewBox="0 0 10 14"><path d="M1 1L7 7L1 13" fill="none" stroke="#c9cbd0" stroke-width="1.500"/></svg>
</div>

<div class="keys"><b>&lt;Ctrl - </b><span>右键</span></div>
</body>
</html>
```

FILE: styles.css
```css
* { box-sizing: border-box; }
body {
  margin: 0;
  height: 100vh;
  display: flex;
  flex-direction: column;
  overflow: hidden;
  position: relative;
  background: #f5f5f5;
  color: #2b2b2b;
  font: 15px/20px "Open Sans", "Noto Sans CJK SC", sans-serif;
}
button, input, select { font: inherit; color: inherit; }
button {
  padding: 0;
  border: 0;
  background: none;
}
a { color: inherit; text-decoration: none; }
svg { display: block; flex: none; }
.defs { position: absolute; width: 0; height: 0; }
.i14 { width: 14px; height: 14px; }
.i16 { width: 16px; height: 16px; }
.i18 { width: 18px; height: 18px; }
.i20 { width: 20px; height: 20px; }
.i40 { width: 40px; height: 40px; }
.tool { display: flex; align-items: center; justify-content: center; }

.caret {
  width: 0;
  height: 0;
  border: 3px solid transparent;
  border-top: 4px solid #3a3a3a;
  border-bottom: 0;
}
.caret.lg { border-width: 5px 5px 0; }
.caret.light { border-top-color: #ddd; }
.caret.dim { border-top-color: #8a8a8a; }
.caret.dark { border-width: 5px 5px 0; border-top-color: #505050; }
.caret.pale { border-top-color: #ccc; }
.bar { width: 1px; height: 24px; background: #777; }

/* title bar */
.titlebar {
  flex: none;
  display: grid;
  grid-template-columns:
    14px 28px 30px 16px 30px 14px 12px 26px 34px 12px 32px 8px 40px 20px
    131px 30px 125px 26px 38px 22px 36px 14px minmax(0, 1fr)
    14px 225px 28px 30px 32px 102px 17px 36px 6px 38px 9px 15px;
  height: 27px;
  align-items: center;
  justify-items: center;
  background: #535353;
  color: #dcdcdc;
}
.cut { margin-right: 6px; }
.combo {
  display: grid;
  grid-template-columns: 1fr 18px;
  align-items: center;
  width: 125px;
  height: 27px;
  background: #959595;
}
.combo.first { justify-self: end; }
.combo select {
  grid-area: 1 / 1 / 2 / 3;
  width: 100%;
  height: 27px;
  padding: 0 8px;
  border: 0;
  appearance: none;
  background: none;
  color: #787878;
  font-style: italic;
}
.combo .caret { grid-area: 1 / 2; }
.title {
  justify-self: stretch;
  align-self: stretch;
  margin: 0 22px 0 0;
  padding: 2px 0 0 45px;
  font-size: 16px;
  line-height: 24px;
  font-weight: 300;
  white-space: nowrap;
  overflow: hidden;
  background: linear-gradient(#eee, #eee) right top / calc(100% + 36px) 2px no-repeat;
}
.title span { margin-left: 14px; }
.play { border: 5px solid transparent; border-left-color: #ddd; border-right: 0; justify-self: start; }
.search {
  width: 225px;
  height: 25px;
  align-self: start;
  padding: 0 6px;
  border: 0;
  background: #959595;
}
.search::placeholder { color: #d0d0d0; opacity: 1; }
.login { justify-self: start; font-weight: 300; }

/* ribbon tabs */
.tabs {
  flex: none;
  display: flex;
  align-items: center;
  height: 31px;
  padding-top: 5px;
  background: #535353;
  border-bottom: 1px solid #7dc878;
  color: #d6d6d6;
}
.tab { padding: 0 12px; line-height: 25px; white-space: nowrap; font-weight: 300; }
.tab.lead { margin-left: -40px; }
.tab.active { background: #8dff86; color: #3d5a3b; }
.tab.latin { font-size: 14px; font-weight: 400; }
.collapse {
  display: flex;
  align-items: center;
  justify-content: center;
  width: 16px;
  height: 9px;
  margin: 0 8px 0 29px;
  border-radius: 2px;
  background: #e4e4e4;
}
.collapse span { border: 3px solid transparent; border-bottom: 4px solid #333; border-top: 0; }

/* ribbon */
.ribbon {
  flex: none;
  display: flex;
  height: 118px;
  background: #f5f5f5;
  border-top: 1px solid #e0fbdc;
}
.panel {
  display: flex;
  flex-direction: column;
  justify-content: space-between;
  border-right: 1px solid #d6d6d6;
}
.create { width: 431px; }
.modify { width: 211px; }
.pattern { width: 76px; }
.constrain { width: 217px; }
.insert { width: 87px; }
.format { width: 105px; }
.params { width: 61px; }
.exit { width: 73px; border-right: 0; }
.tools { display: flex; height: 94px; }
.stack {
  display: grid;
  grid-template-rows: repeat(3, 31px);
  grid-auto-flow: row;
  padding-left: 7px;
}
.modify .stack { grid-template-columns: repeat(3, 68px); }
.row { display: flex; align-items: center; gap: 7px; white-space: nowrap; }
.more { width: 93px; border-right: 1px solid #cfcfcf; }
.more .caret { margin-left: 5px; }
.big { display: flex; flex-direction: column; align-items: center; padding-top: 4px; line-height: 28px; }
.big .caret { margin-top: 1px; }
.w46 { width: 46px; }
.w48 { width: 49px; }
.w58 { width: 57px; }
.project { flex: 1; }
.constrain .big { width: 49px; }
.constrain .big svg { height: 34px; margin: 3px 0; }
.full { width: 100%; }
.cells {
  display: grid;
  grid-template-rows: repeat(3, 27px);
  row-gap: 4px;
  padding-top: 2px;
}
.cells button:not(.row) {
  display: flex;
  align-items: center;
  justify-content: center;
  border: 1px solid #cbcbcb;
  margin-right: -1px;
  background: linear-gradient(#f7f7f7, #fff);
}
.one { width: 28px; margin-right: 15px; }
.four { grid-template-columns: repeat(4, 30px); }
.two { grid-template-columns: 30px 28px; margin-left: 3px; }
.cells .on { background: #a9d0fa !important; border-color: #2d6bb0 !important; }
.wide { grid-column: 1 / 3; margin-left: 4px; }
.foot {
  display: flex;
  align-items: center;
  justify-content: center;
  gap: 8px;
  height: 22px;
}
.create .foot { padding-right: 4px; }
.exit .foot { margin: 0 1px 0 1px; background: #8dff86; }

/* work area */
.work { flex: 1; display: flex; min-height: 0; }
.browser { flex: none; width: 147px; border-right: 4px solid #515151; background: #fff; overflow: hidden; color: #111; font-size: 12px; }
.bhead {
  display: flex;
  align-items: center;
  justify-content: flex-end;
  gap: 9px;
  height: 24px;
  padding-right: 2px;
  background: #606060;
  color: #d6d6d6;
}
.tree {
  height: 100px;
  margin: 1px 2px 25px 0;
  padding: 26px 0 0;
  list-style: none;
  background: #d5d5d5;
}
.tree li { height: 24px; line-height: 24px; white-space: nowrap; }
.tree .b { margin-left: -21px; }
.end { height: 25px; line-height: 26px; margin-right: 2px; background: #d5d5d5; overflow: hidden; }
.end span { margin-left: -21px; }
.doc { flex: 1; display: flex; flex-direction: column; min-width: 0; }
.canvas {
  flex: 1;
  position: relative;
  overflow: hidden;
  background: linear-gradient(#7b8aab, #8d9bb6 14%, #98a6bc 32%, #9faabd 45%, #98a2b6 60%, #979db0 68%, #a8abb5 78%, #b9babe 88%, #c6c7ca);
}
.canvas::before {
  content: "";
  position: absolute;
  inset: 0;
  background: linear-gradient(90deg, rgba(34, 42, 52, .8), rgba(34, 42, 52, .5) 11%, rgba(34, 42, 52, .2) 24%, rgba(34, 42, 52, 0) 38%, rgba(34, 42, 52, 0) 62%, rgba(34, 42, 52, .2) 78%, rgba(34, 42, 52, .46) 90%, rgba(34, 42, 52, .72));
  mask-image: linear-gradient(#000, rgba(0, 0, 0, .8) 35%, rgba(0, 0, 0, .7) 55%, rgba(0, 0, 0, .52) 67%, rgba(0, 0, 0, .2) 78%, rgba(0, 0, 0, .06) 88%, transparent);
}
.sketch { position: absolute; inset: 0; width: 100%; height: 100%; }
.triad { position: absolute; left: 9px; bottom: 35px; }
.ty, .tz { font: 12px "Liberation Sans", sans-serif; }
.ty { fill: #4fd04f; }
.tz { fill: #3030c0; }

/* marking menu, placed round the pointer */
.marking { position: absolute; left: 1012px; top: 240px; font-size: 13px; }
.marking > * { position: absolute; }
.ring { left: -26px; top: -27px; width: 54px; height: 54px; border: 4px solid rgba(125, 135, 190, .22); border-radius: 50%; }
.cursor { left: 0; top: -1px; }
.pill {
  display: flex;
  align-items: center;
  justify-content: space-between;
  width: 67px;
  height: 24px;
  padding: 0 7px 0 8px;
  border: 1px solid #a5a7aa;
  border-radius: 12px;
  background: linear-gradient(#ececec, #c9cacc);
  box-shadow: 0 1px 2px rgba(40, 45, 60, .7);
  color: #111;
  font-size: 13px;
  white-space: nowrap;
}
.west { padding: 0 9px 0 7px; }
.p1 { left: -32px; top: -79px; }
.p2 { left: -93px; top: -44px; }
.p3 { left: 29px; top: -44px; }
.p4 { left: -116px; top: -13px; }
.p5 { left: 51px; top: -13px; }
.p6 { left: -93px; top: 18px; }
.p7 { left: 29px; top: 18px; }
.p8 { left: -32px; top: 53px; }
.menu {
  left: -82px;
  top: 87px;
  width: 168px;
  padding: 1px 4px 4px;
  border-radius: 4px;
  background: #cbccce;
  box-shadow: 0 1px 2px rgba(40, 45, 60, .6);
}
.menu button { display: flex; align-items: center; gap: 7px; height: 21px; color: #111; font-size: 13px; white-space: nowrap; }

/* document tabs */
.docbar { flex: none; display: flex; height: 30px; margin-left: -4px; background: #5a5a5a; color: #d8d8d8; line-height: 30px; }
.views { display: flex; width: 155px; gap: 10px; padding-left: 9px; border-right: 1px solid #999; }
.up { border: 6px solid transparent; border-bottom: 10px solid #ccc; border-top: 0; margin-left: 4px; }
.doctab { padding: 0 10px; font-weight: 300; }
.doctab.second { padding: 0 15px; }
.doctab.open { display: flex; align-items: center; gap: 10px; background: #f5f5f5; color: #444; padding-right: 14px; font-weight: 400; }

.status { flex: none; display: flex; align-items: center; gap: 10px; height: 29px; margin-left: 352px; padding: 0 0 0 6px; border-left: 1px solid #d8d8d8; }
.status .caret { margin: 0 -1px; }

/* screen recorder bar over the window */
.recorder {
  position: absolute;
  top: 83px;
  right: 0;
  display: flex;
  align-items: center;
  width: 423px;
  height: 31px;
  padding-left: 9px;
  background: #252a33;
  color: #fff;
  overflow: hidden;
}
.down { border: 6px solid transparent; border-top: 8px solid #d0d2d6; border-bottom: 0; margin-right: 13px; }
.recorder > svg { margin-right: 11px; }
.clock { width: 141px; white-space: nowrap; }
.recorder .tool { width: 35px; }
.recorder .shot { width: 41px; }
.recorder .pen { width: 30px; }
.recorder .bar { height: 12px; background: #5a5f68; }
.recorder .next { margin: 0 0 0 12px; }

/* pressed keys shown over the window */
.keys {
  position: absolute;
  right: -80px;
  bottom: 3px;
  display: flex;
  align-items: center;
  width: 334px;
  height: 82px;
  padding-left: 7px;
  border: 6px solid #2f86e4;
  border-radius: 6px;
  background: rgba(75, 75, 75, .82);
  box-shadow: inset 0 0 0 2px #3f5878;
  color: #fff;
  white-space: pre;
}
.keys b { font: 900 48px/60px Inter, sans-serif; }
.keys span { margin-left: 8px; font: 300 52px/60px "Noto Sans CJK SC", sans-serif; }
```
